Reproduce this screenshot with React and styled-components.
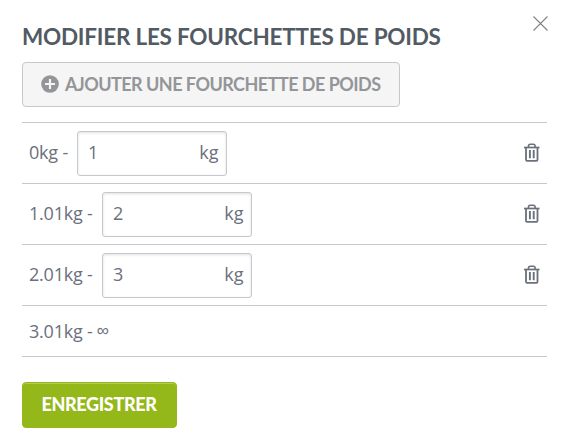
import { useState } from "react";
import styled, { createGlobalStyle } from "styled-components";

const GlobalStyle = createGlobalStyle`
  * {
    box-sizing: border-box;
  }
  body {
    margin: 0;
    background: #fff;
    color: #6a707c;
    font-family: "Open Sans", sans-serif;
    font-size: 18px;
  }
`

const Modal = styled.div`
  position: relative;
  width: 569px;
  height: 445px;
  padding: 22px 22px 0;
  overflow: hidden;
`

const CloseButton = styled.button`
  position: absolute;
  top: 16px;
  right: 21px;
  width: 15px;
  height: 15px;
  padding: 0;
  border: 0;
  background: none;
  svg {
    display: block;
  }
`

const Title = styled.h2`
  margin: 0;
  height: 40px;
  color: #525b63;
  font-family: Lato, sans-serif;
  font-size: 22.5px;
  font-weight: 700;
  line-height: 29px;
  letter-spacing: -0.23px;
  white-space: nowrap;
`

const AddButton = styled.button`
  display: flex;
  align-items: center;
  gap: 6px;
  width: 378px;
  height: 45px;
  padding: 0 0 2px 18px;
  border: 1px solid #c8c8c8;
  border-radius: 4px;
  background: #f5f5f5;
  color: #939598;
  font-family: Lato, sans-serif;
  font-size: 18px;
  font-weight: 700;
  letter-spacing: -0.53px;
  white-space: nowrap;
`

const RangeList = styled.ul`
  margin: 15px 0 25px;
  padding: 0;
  width: 525px;
  list-style: none;
  border-top: 1px solid #c5c8cd;
`

const RangeRow = styled.li`
  display: flex;
  align-items: center;
  height: ${props => props.$last ? 51 : 61}px;
  padding: 0 7px;
  border-bottom: 1px solid #c5c8cd;
`

const RangeStart = styled.span`
  width: ${props => props.$width}px;
  padding-bottom: ${props => props.$width ? 2 : 0}px;
  letter-spacing: -0.2px;
  white-space: nowrap;
`

const WeightField = styled.label`
  display: flex;
  align-items: center;
  width: 150px;
  height: 45px;
  padding: 0 7.5px 2px 10px;
  border: 1px solid #c5c8cd;
  border-radius: 3px;
  box-shadow: inset 0 1px 3px rgba(0, 0, 0, 0.12);
`

const WeightInput = styled.input`
  flex: 1;
  min-width: 0;
  padding: 0;
  border: 0;
  outline: 0;
  background: none;
  color: inherit;
  font: inherit;
`

const DeleteButton = styled.button`
  margin-left: auto;
  padding: 0 0 2px;
  border: 0;
  background: none;
  color: #6a707c;
  svg {
    display: block;
  }
`

const Infinity = styled.span`
  margin-left: 4px;
  font-family: "Liberation Sans", sans-serif;
  font-size: 17px;
`

const SaveButton = styled.button`
  display: block;
  width: 155px;
  height: 46px;
  padding: 0 1px 3px 0;
  border: 1px solid #94b719;
  border-radius: 4px;
  background: #94b719;
  box-shadow: inset 0 1px 0 #b2cc57;
  color: #fff;
  font-family: Lato, sans-serif;
  font-size: 18px;
  font-weight: 900;
  letter-spacing: -0.35px;
`

const CloseIcon = () => (
  <svg width="15" height="15" viewBox="0 0 15 15" fill="none" stroke="#838383" strokeWidth="1.1">
    <path d="M.5.5l14 14M14.5.5l-14 14" />
  </svg>
)

const PlusIcon = () => (
  <svg width="18" height="18" viewBox="0 0 18 18">
    <circle cx="9" cy="9" r="8.8" fill="#939598" />
    <path d="M9 4v10M4 9h10" stroke="#f5f5f5" strokeWidth="2.2" />
  </svg>
)

const TrashIcon = () => (
  <svg width="16" height="19" viewBox="0 0 16 19" fill="none" stroke="currentColor">
    <path d="M0 4.5h15.5" strokeWidth="1.7" />
    <path d="M4.5 4V3q0-1.8 1.8-1.8h3Q11.1 1.2 11.1 3v1" strokeWidth="1.6" />
    <path d="M2 4.5v12.2q0 1.1 1.1 1.1h9.3q1.1 0 1.1-1.1V4.5" strokeWidth="1.8" />
    <path d="M5.9 7v8.2M9.7 7v8.2" strokeWidth="1.9" />
  </svg>
)

const App = () => {
  const [ranges, setRanges] = useState([
    { start: "0", value: "1", width: 48 },
    { start: "1.01", value: "2", width: 73 },
    { start: "2.01", value: "3", width: 73 },
  ])

  const changeValue = (index, value) => {
    setRanges(ranges.map((range, i) => i === index ? { ...range, value } : range))
  }

  return (
    <>
      <GlobalStyle />
      <Modal>
        <CloseButton aria-label="Fermer"><CloseIcon /></CloseButton>
        <Title>MODIFIER LES FOURCHETTES DE POIDS</Title>
        <AddButton>
          <PlusIcon />
          AJOUTER UNE FOURCHETTE DE POIDS
        </AddButton>
        <RangeList>
          {ranges.map((range, index) => (
            <RangeRow key={range.start}>
              <RangeStart $width={range.width}>{range.start}kg -</RangeStart>
              <WeightField>
                <WeightInput value={range.value} onChange={e => changeValue(index, e.target.value)} />
                kg
              </WeightField>
              <DeleteButton aria-label="Supprimer"><TrashIcon /></DeleteButton>
            </RangeRow>
          ))}
          <RangeRow $last>
            <RangeStart>3.01kg -</RangeStart>
            <Infinity>∞</Infinity>
          </RangeRow>
        </RangeList>
        <SaveButton>ENREGISTRER</SaveButton>
      </Modal>
    </>
  )
}

export default App;
